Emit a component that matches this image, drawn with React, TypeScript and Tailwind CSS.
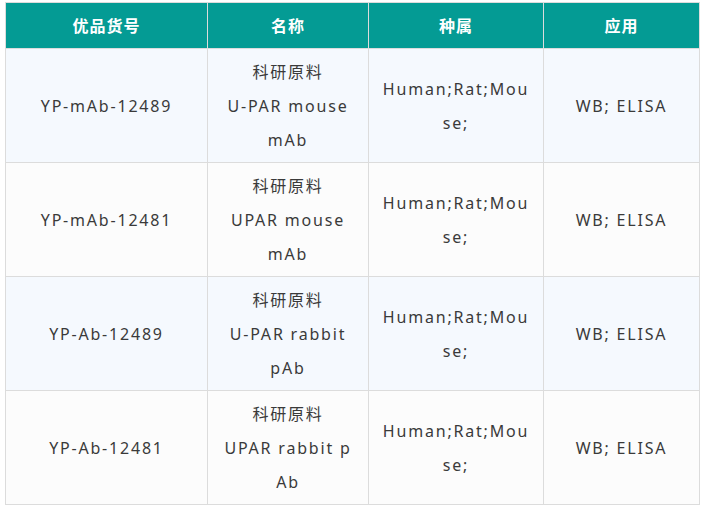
import React from "react";

const rows = [
  { code: "YP-mAb-12489", name: ["科研原料", "U-PAR mouse", "mAb"] },
  { code: "YP-mAb-12481", name: ["科研原料", "UPAR mouse", "mAb"] },
  { code: "YP-Ab-12489", name: ["科研原料", "U-PAR rabbit", "pAb"] },
  { code: "YP-Ab-12481", name: ["科研原料", "UPAR rabbit p", "Ab"] },
];

const cell = "border border-[#dcdcdc] text-center align-middle";

export default function App() {
  return (
    <div
      className="w-[704px] h-[508px] bg-white pt-[2px] pl-[5px]"
      style={{ fontFamily: '"Noto Sans", "Noto Sans CJK SC", sans-serif' }}
    >
      <table className="border-collapse table-fixed w-[694px] text-[16px] tracking-[1.8px] text-[#3a3a3a]">
        <colgroup>
          <col className="w-[202px]" />
          <col className="w-[161px]" />
          <col className="w-[175px]" />
          <col className="w-[156px]" />
        </colgroup>
        <thead>
          <tr className="h-[46px] bg-[#049b94] text-white font-bold tracking-[1px]">
            <th className={cell}>优品货号</th>
            <th className={cell}>名称</th>
            <th className={cell}>种属</th>
            <th className={cell}>应用</th>
          </tr>
        </thead>
        <tbody>
          {rows.map((r, i) => (
            <tr key={r.code} className={`h-[114px] ${i % 2 === 0 ? "bg-[#f5f9fe]" : "bg-[#fcfcfc]"}`}>
              <td className={cell}>{r.code}</td>
              <td className={`${cell} leading-[34px]`}>
                {r.name.map((n) => (
                  <div key={n}>{n}</div>
                ))}
              </td>
              <td className={`${cell} leading-[34px]`}>
                <div>Human;Rat;Mou</div>
                <div>se;</div>
              </td>
              <td className={cell}>WB; ELISA</td>
            </tr>
          ))}
        </tbody>
      </table>
    </div>
  );
}
